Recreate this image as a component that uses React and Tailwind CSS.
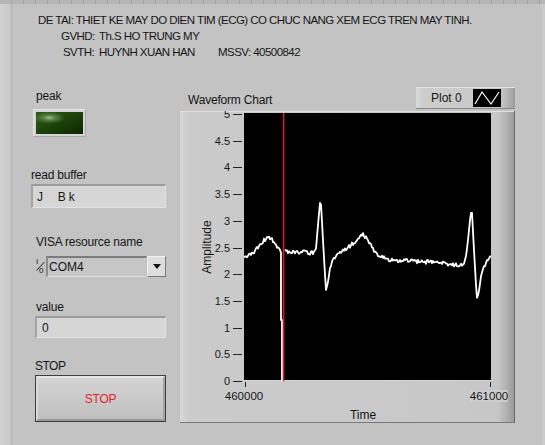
import React from "react";

const TICKS = [5, 4.5, 4, 3.5, 3, 2.5, 2, 1.5, 1, 0.5, 0];
const STEP = 26.7;

function buildPath(keys, amp, seed) {
  let d = "";
  for (let k = 0; k < keys.length - 1; k++) {
    const [x0, y0] = keys[k];
    const [x1, y1] = keys[k + 1];
    const dx = x1 - x0;
    const steps = Math.max(1, Math.round(dx));
    const steep = Math.abs((y1 - y0) / Math.max(dx, 0.1)) > 3;
    for (let s = k === 0 ? 0 : 1; s <= steps; s++) {
      const t = s / steps;
      const x = x0 + dx * t;
      let y = y0 + (y1 - y0) * t;
      const i = Math.round(x * 2) + seed;
      const r = Math.sin(i * 12.9898) * 43758.5453;
      const f = r - Math.floor(r);
      y += (f - 0.5) * 2 * (steep ? 0.3 : amp);
      d += (d ? " L" : "M") + x.toFixed(1) + " " + y.toFixed(1);
    }
  }
  return d;
}

const SEG1 = [
  [245, 257], [250, 255], [255, 252], [260, 246], [265, 240], [269, 238],
  [273, 239], [277, 245], [281, 251], [282, 253],
];
const SEG2 = [
  [286, 251], [300, 252], [315, 253], [317, 248], [319, 225], [321, 203],
  [322, 204], [324, 240], [326, 275], [327, 290], [329, 282], [331, 268],
  [334, 259], [340, 253], [348, 248], [355, 243], [360, 238], [364, 235],
  [367, 237], [371, 244], [376, 252], [382, 257], [392, 260], [410, 261],
  [430, 262], [450, 264], [460, 265], [464, 264], [467, 257], [469, 240],
  [471, 220], [472, 213], [473, 214], [475, 250], [477, 285], [478, 298],
  [480, 292], [482, 276], [485, 266], [489, 260], [492, 257],
];

const PATH1 = buildPath(SEG1, 1.7, 3) + " L282 320 L283 320 L283 381";
const PATH2 = buildPath(SEG2, 2.0, 11);

function Field({ className, children }) {
  return (
    <div
      className={
        "flex items-center bg-[#d6d6d6] border-t-2 border-l-2 border-b border-r border-t-[#9c9c9c] border-l-[#a4a4a4] border-b-[#e2e2e2] border-r-[#e2e2e2] pl-[4px] " +
        className
      }
    >
      {children}
    </div>
  );
}

function YAxis() {
  return (
    <div className="relative w-[64px] h-[268px] shrink-0">
      <div className="absolute left-[27px] top-[134px] -translate-x-1/2 -translate-y-1/2 -rotate-90 text-[12px] leading-[14px] whitespace-nowrap">
        Amplitude
      </div>
      {TICKS.map((v, idx) => {
        const y = 1 + idx * STEP;
        return (
          <React.Fragment key={v}>
            <div
              className="absolute right-[14px] text-[11px] leading-[12px] -translate-y-1/2"
              style={{ top: y }}
            >
              {String(v)}
            </div>
            <div
              className="absolute left-[53px] w-[9px] h-px bg-[#222222]"
              style={{ top: y }}
            />
          </React.Fragment>
        );
      })}
    </div>
  );
}

function Plot() {
  return (
    <div className="relative w-[247px] h-[268px] shrink-0 bg-black border-b border-[#d4d4d4]">
      <svg
        className="absolute inset-0"
        width="247"
        height="268"
        viewBox="245 113 247 268"
      >
        <path d={PATH1} fill="none" stroke="#ffffff" strokeWidth="1.8" strokeLinejoin="round" />
        <path d={PATH2} fill="none" stroke="#ffffff" strokeWidth="1.8" strokeLinejoin="round" />
        <line x1="284.6" y1="113" x2="284.6" y2="381" stroke="#cf1f26" strokeWidth="1.6" />
      </svg>
    </div>
  );
}

function Legend() {
  return (
    <div className="w-[99px] h-[22px] flex items-center pl-[15px] bg-[linear-gradient(to_right,#dadada_0px,#cdcdcd_6px,#c8c8c8_84px,#b4b4b4_92px,#9c9c9c_99px)] border-t border-[#e2e2e2] border-b border-b-[#8a8a8a] text-[12px] leading-[16px]">
      <span>Plot 0</span>
      <svg className="ml-[11px]" width="28" height="18" viewBox="0 0 28 18">
        <rect x="0" y="0" width="28" height="18" fill="#000" />
        <polyline
          points="2,15 9,3 18,15 26,3"
          fill="none"
          stroke="#fff"
          strokeWidth="1.2"
        />
      </svg>
    </div>
  );
}

function Chart() {
  return (
    <div className="w-[335px] shrink-0 flex flex-col">
      <div className="mt-[27px] h-[24px] flex justify-between items-start">
        <div className="pt-[5px] pl-[8px] text-[12px] leading-[16px] tracking-[-0.2px]">
          Waveform Chart
        </div>
        <Legend />
      </div>
      <div className="w-[335px] h-[312px] overflow-hidden flex flex-col pt-[2px] border-r border-b border-r-[#6a6a6a] border-b-[#7a7a7a] bg-[linear-gradient(to_right,#d8d8d8_0px,#cbcbcb_9px,#c7c7c7_318px,#b2b2b2_326px,#9a9a9a_334px)] shadow-[inset_0_1px_0_#e0e0e0]">
        <div className="flex h-[268px]">
          <YAxis />
          <Plot />
        </div>
        <div className="relative h-[41px]">
          <div className="absolute left-[65px] top-[1px] w-px h-[5px] bg-[#222]" />
          <div className="absolute left-[310px] top-[1px] w-px h-[5px] bg-[#222]" />
          <div className="absolute left-[64px] top-[9px] -translate-x-1/2 text-[11.5px] leading-[12px]">
            460000
          </div>
          <div className="absolute left-[309px] top-[9px] -translate-x-1/2 text-[11.5px] leading-[12px] bg-[#cdcdcd]">
            461000
          </div>
          <div className="absolute left-[183px] top-[27px] -translate-x-1/2 text-[12px] leading-[14px]">
            Time
          </div>
        </div>
      </div>
    </div>
  );
}

function LeftColumn() {
  return (
    <div className="w-[168px] shrink-0 pl-[20px] flex flex-col items-start text-[12px] leading-[16px] tracking-[-0.2px]">
      <div className="mt-[28px] ml-[4px]">peak</div>
      <div className="mt-[5px] ml-[1px] w-[53px] h-[28px] p-[2px] bg-[#d4d4d4] border border-t-[#e4e4e4] border-l-[#e4e4e4] border-b-[#a8a8a8] border-r-[#a8a8a8]">
        <div className="w-full h-full bg-[radial-gradient(ellipse_16px_6px_at_28%_26%,#a7b795_0%,#55803a_40%,transparent_100%),linear-gradient(to_bottom_right,#30591a,#1a4009_55%,#0b2500)]" />
      </div>
      <div className="mt-[30px] -ml-[1px]">read buffer</div>
      <Field className="mt-[1px] -ml-[1px] w-[135px] h-[24px]">
        <span>J</span>
        <span className="ml-[15px]">B k</span>
      </Field>
      <div className="mt-[26px] ml-[4px]">VISA resource name</div>
      <div className="mt-[6px] ml-[3px] w-[131px] h-[21px] flex">
        <div className="relative w-[11px] h-full shrink-0">
          <span className="absolute left-[1px] top-[2px] text-[8px] leading-[8px]">I</span>
          <svg className="absolute left-0 top-0" width="11" height="21" viewBox="0 0 11 21">
            <line x1="1.5" y1="14.5" x2="9.5" y2="6" stroke="#222" strokeWidth="1" />
          </svg>
          <span className="absolute left-[4px] top-[11px] text-[8px] leading-[8px]">0</span>
        </div>
        <div className="flex-1 flex items-center pl-[1px] bg-[#c6c6c6] border-t-2 border-l-2 border-b border-r border-t-[#7c7c7c] border-l-[#8c8c8c] border-b-[#dedede] border-r-[#bdbdbd] tracking-normal">
          COM4
        </div>
        <div className="w-[19px] h-full shrink-0 flex items-center justify-center bg-[#dedede] border border-t-[#f2f2f2] border-l-[#f2f2f2] border-b-[#7a7a7a] border-r-[#7a7a7a]">
          <svg width="8" height="5" viewBox="0 0 8 5">
            <polygon points="0,0 8,0 4,5" fill="#111" />
          </svg>
        </div>
      </div>
      <div className="mt-[22px] ml-[4px]">value</div>
      <Field className="mt-[1px] ml-[3px] w-[131px] h-[22px]">
        <span className="ml-[1px]">0</span>
      </Field>
      <div className="mt-[20px] ml-[3px] tracking-[-0.5px]">STOP</div>
      <div className="mt-[1px] ml-[3px] w-[131px] h-[47px] border border-[#3e3e3e]">
        <div className="w-full h-full flex items-center justify-center bg-[linear-gradient(to_bottom,#d4d4d4,#c8c8c8_60%,#bebebe)] border-2 border-t-[#e6e6e6] border-l-[#dadada] border-b-[#9a9a9a] border-r-[#a2a2a2]">
          <span className="text-[#e3242b] text-[12px] leading-[16px] tracking-[-0.3px]">STOP</span>
        </div>
      </div>
    </div>
  );
}

export default function App() {
  return (
    <div className="w-[545px] h-[445px] overflow-hidden flex flex-col bg-[#c3c3c3] text-[#161616] font-['Liberation_Sans',Arial,sans-serif]">
      <div className="h-[4px] shrink-0 bg-[repeating-linear-gradient(to_right,#b6b6b6_0px,#b6b6b6_11px,#a2a2a2_11px,#a2a2a2_12px)]" />
      <div className="flex flex-1">
        <div className="w-[12px] shrink-0 bg-[linear-gradient(to_right,#d2d2d2,#c8c8c8)] border-r border-[#b0b0b0]" />
        <div className="flex-1 flex flex-col">
          <div className="pt-[8px] text-[11.5px] leading-[16px] tracking-[-0.55px]">
            <div className="pl-[26px] whitespace-nowrap">
              DE TAI: THIET KE MAY DO DIEN TIM (ECG) CO CHUC NANG XEM ECG TREN MAY TINH.
            </div>
            <div className="pl-[49px] flex whitespace-nowrap">
              <span className="w-[38px]">GVHD:</span>
              <span>Th.S HO TRUNG MY</span>
            </div>
            <div className="pl-[51px] flex whitespace-nowrap">
              <span className="w-[36px]">SVTH:</span>
              <span className="w-[119px]">HUYNH XUAN HAN</span>
              <span>MSSV: 40500842</span>
            </div>
          </div>
          <div className="flex items-start">
            <LeftColumn />
            <Chart />
          </div>
        </div>
        <div className="w-[3px] shrink-0 bg-[#cbcbcb]" />
      </div>
    </div>
  );
}
